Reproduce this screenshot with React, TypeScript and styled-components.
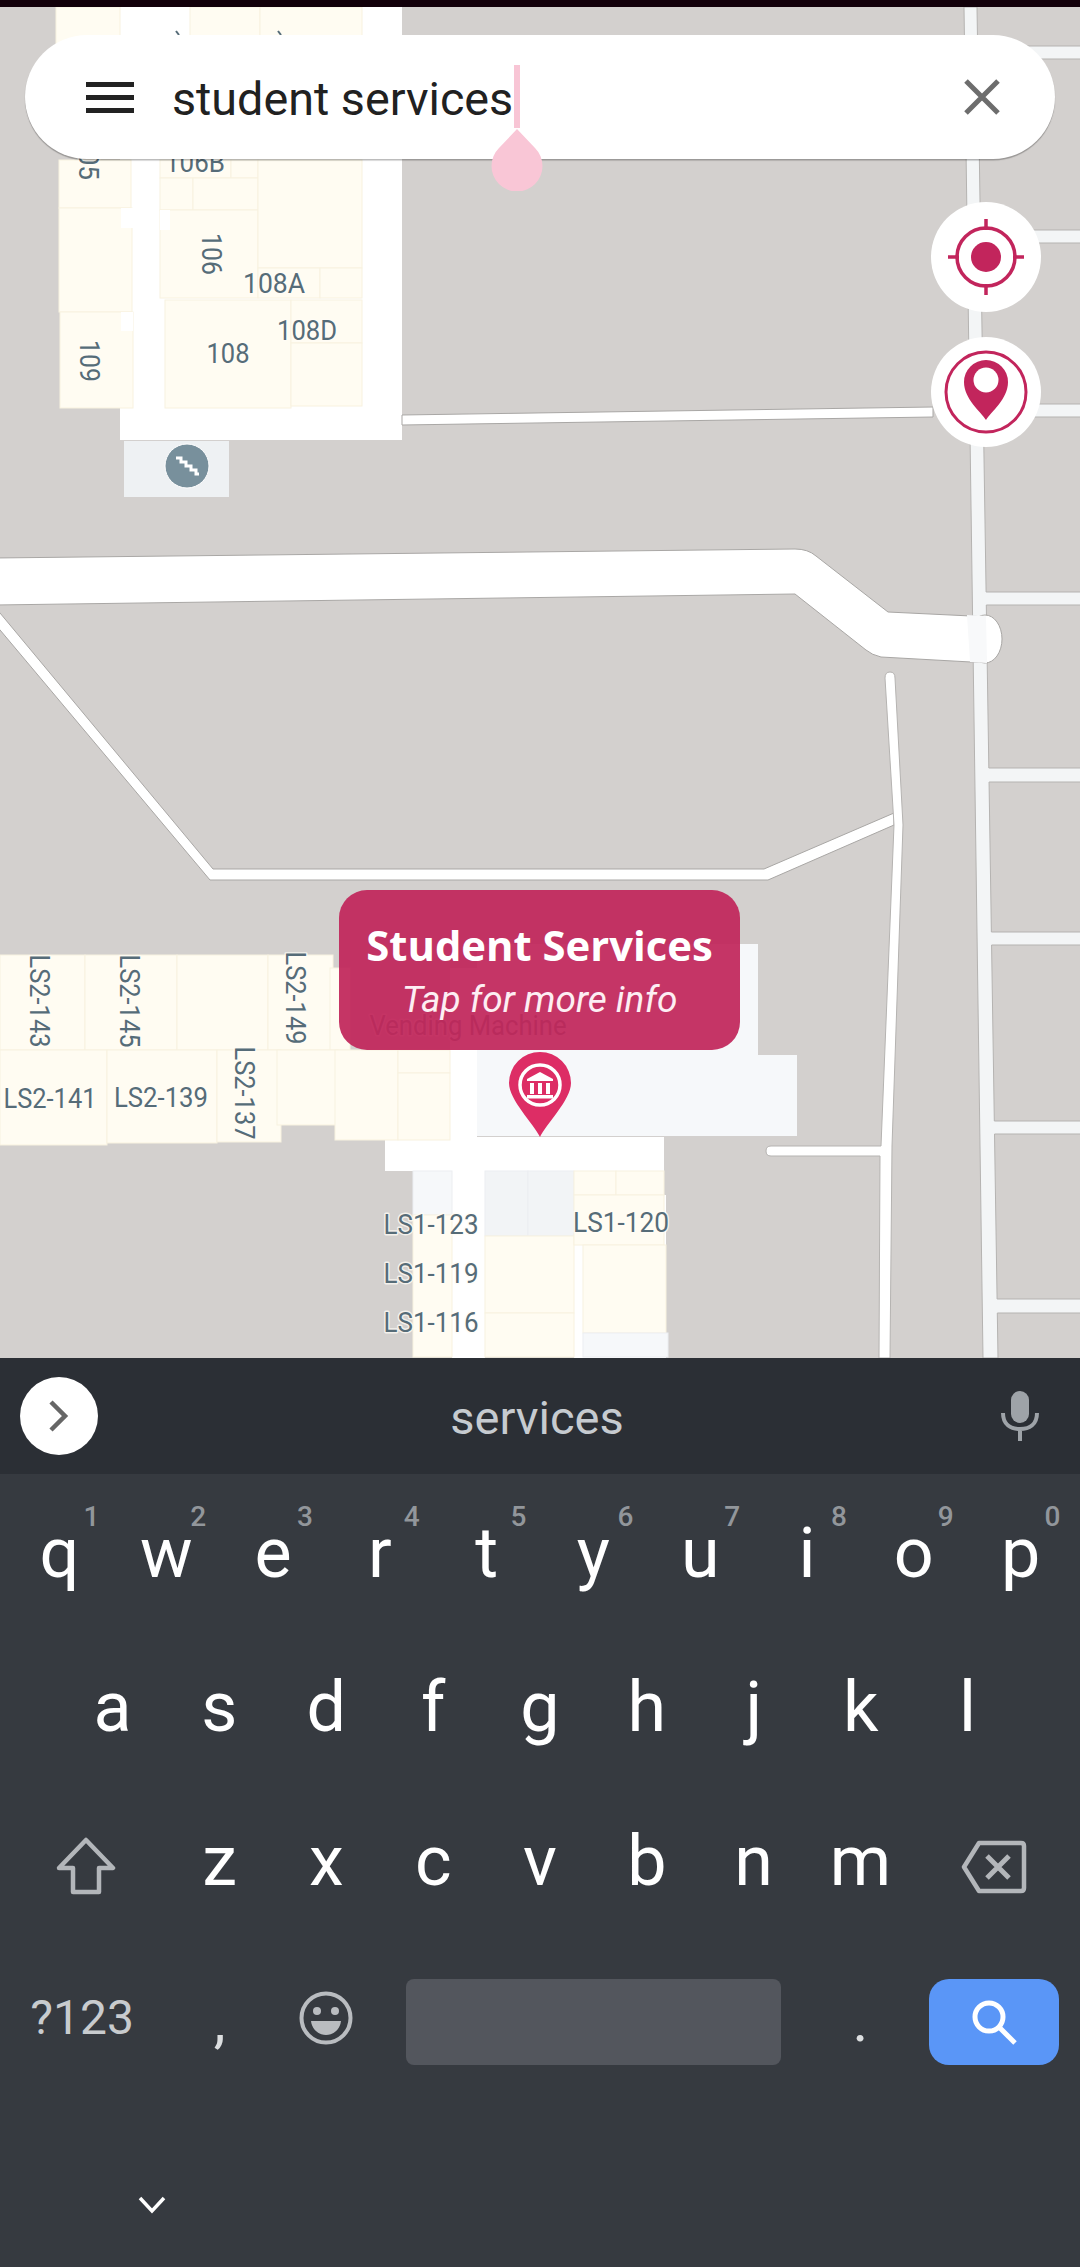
import React from 'react';
import styled, { createGlobalStyle } from 'styled-components';

const Global = createGlobalStyle`
  html, body { margin: 0; padding: 0; background: #363a40; }
`;

const Screen = styled.div`
  width: 1080px; height: 2267px; display: flex; flex-direction: column; overflow: hidden;
  font-family: Roboto, "Liberation Sans", sans-serif;
`;
const StatusStrip = styled.div`height: 7px; background: #12000a; flex: none;`;
const MapArea = styled.div`position: relative; height: 1351px; flex: none; background: #d3d0ce; overflow: hidden;`;
const MapSvg = styled.svg`position: absolute; inset: 0; display: block;`;
const RoomLabel = styled.text`
  font-family: Roboto, sans-serif; fill: #566c78; font-size: 27px;
  stroke: rgba(255,253,246,.75); stroke-width: 3px; paint-order: stroke; stroke-linejoin: round;
`;

const SearchBar = styled.div`
  position: absolute; left: 25px; top: 28px; width: 1030px; height: 124px; box-sizing: border-box;
  display: flex; align-items: center; padding: 0 55px 0 61px; gap: 38px;
  background: #fff; border-radius: 62px; box-shadow: 0 1.5px 1px rgba(0,0,0,.28);
`;
const MenuIcon = styled.span`
  width: 48px; height: 31px; flex: none; box-sizing: border-box;
  border-top: 5px solid #222; border-bottom: 5px solid #222; position: relative;
  &::after { content: ''; position: absolute; left: 0; right: 0; top: 8px; height: 5px; background: #222; }
`;
const QueryText = styled.span`font-size: 46.7px; color: #212121; flex: 1; line-height: 60px; padding-top: 3px;`;
const Caret = styled.div`position: absolute; left: 514px; top: 58px; width: 6px; height: 63px; background: #f8c5d5;`;
const CaretHandle = styled.svg`position: absolute; left: 491px; top: 122px;`;

const RoundButton = styled.div<{ $top: number }>`
  position: absolute; left: 931px; top: ${p => p.$top}px; width: 110px; height: 110px; border-radius: 50%;
  background: #fff; display: flex; align-items: center; justify-content: center;
`;

const Tooltip = styled.div`
  position: absolute; left: 339px; top: 883px; width: 401px; height: 160px; box-sizing: border-box;
  border-radius: 28px; background: rgba(193, 38, 90, .93); color: #fff;
  display: flex; flex-direction: column; align-items: center; padding-top: 27px;
`;
const TooltipTitle = styled.div`font-family: "Open Sans", sans-serif; font-weight: 700; font-size: 41.8px; line-height: 55px;`;
const TooltipSub = styled.div`font-family: Roboto, sans-serif; font-style: italic; font-size: 37px; line-height: 50px; margin-top: 3px; color: #fdeef3;`;
const PinMark = styled.svg`position: absolute; left: 508px; top: 1045px;`;

const SuggestionBar = styled.div`
  height: 116px; flex: none; background: #2b2f35; display: flex; align-items: center; justify-content: space-between;
  padding: 0 41px 0 20px; position: relative;
`;
const ExpandButton = styled.div`
  width: 78px; height: 78px; border-radius: 50%; background: #fff; display: flex; align-items: center; justify-content: center;
`;
const Suggestion = styled.div`
  position: absolute; left: 0; right: 0; text-align: center; padding-right: 6px; font-size: 47px; line-height: 60px; color: #c6cbd0;
  margin-top: 4px;
`;

const Keyboard = styled.div`flex: 1; background: #363a40; padding: 9px 6px 0; display: flex; flex-direction: column;`;
const Row = styled.div<{ $inset?: number }>`display: flex; height: 154px; flex: none; padding: 0 ${p => p.$inset || 0}px;`;
const Key = styled.div<{ $w?: number }>`
  flex: ${p => p.$w || 1} 0 0; position: relative; display: flex; align-items: center; justify-content: center; min-width: 0;
`;
const Letter = styled.span`font-size: 70px; line-height: 154px; color: #fff; padding-bottom: 14px;`;
const Hint = styled.span`
  position: absolute; left: calc(50% + 32px); top: 17px; transform: translateX(-50%);
  font-size: 28px; font-weight: 500; line-height: 34px; color: #92969b;
`;
const FnLabel = styled.span`font-size: 48px; line-height: 60px; color: #c8cbce; padding: 0 8px 8px 0;`;
const Punct = styled.span`font-size: 60px; line-height: 154px; color: #dcdee0; padding-bottom: 2px;`;
const SpaceBar = styled.div`height: 86px; width: 375px; border-radius: 8px; background: #53565d; margin-bottom: 1px;`;
const SpaceKey = styled.div`flex: 4 0 0; min-width: 0; display: flex; align-items: center; justify-content: center;`;
const SearchKey = styled.div`
  flex: 1.5 0 0; min-width: 0; display: flex; align-items: center; justify-content: flex-end;
`;
const SearchFace = styled.div`
  width: 130px; height: 86px; border-radius: 20px; background: #5a96f7; display: flex; align-items: center; justify-content: center;
  margin-right: 15px;
`;
const NavRow = styled.div`padding: 97px 0 0 132px; display: flex;`;
const ShiftGlyph = styled.svg`margin-bottom: 4px;`;
const BackGlyph = styled.svg`margin-bottom: 2px;`;
const EmojiGlyph = styled.svg`margin-bottom: 8px;`;

const cream = '#fffcf2';
const light = '#f6f8fa';
const white = '#ffffff';
type R = [number, number, number, number, string?];

const rooms: R[] = [
  [56, 7, 64, 40], [190, 7, 70, 40], [260, 7, 102, 40],
  [59, 160, 72, 48], [59, 208, 73, 104], [60, 312, 73, 96],
  [160, 160, 71, 18], [231, 160, 27, 18], [160, 178, 33, 32], [193, 178, 65, 32], [160, 210, 98, 88],
  [258, 160, 104, 108], [258, 268, 62, 30], [320, 268, 42, 30],
  [165, 300, 126, 108], [291, 300, 71, 43], [291, 343, 71, 63],
  [0, 955, 85, 95], [85, 955, 92, 95], [177, 955, 91, 95], [268, 955, 65, 95], [330, 968, 20, 82],
  [0, 1050, 107, 95], [107, 1050, 110, 93], [217, 1050, 64, 92], [277, 1050, 61, 75],
  [335, 1050, 63, 90], [398, 1050, 52, 23], [398, 1073, 52, 67],
  [413, 1171, 39, 44, light], [413, 1215, 39, 142],
  [485, 1171, 43, 65, '#f2f4f6'], [528, 1171, 46, 65, '#f2f4f6'],
  [485, 1236, 89, 77], [485, 1313, 89, 44],
  [574, 1171, 42, 24], [616, 1171, 48, 24], [574, 1195, 90, 50], [583, 1245, 83, 88], [583, 1333, 85, 24, light],
];
const corridorNotches: R[] = [[121, 208, 12, 20, white], [121, 312, 12, 19, white], [160, 210, 10, 20, white]];

const edge = '#a9a7a5';
const laneEdge = '#b5b3b1';
const laneRight = (y: number) => 977 + (y - 7) * 21 / 1350;
const crossStreets: [number, number][] = [[46, 59], [230, 243], [404, 417], [592, 605], [768, 782], [932, 945], [1121, 1134], [1299, 1313]];

type L = { t: string; x: number; y: number; len: number; rot?: boolean };
const labels: L[] = [
  { t: '105', x: 89, y: 158, len: 44, rot: true },
  { t: '106B', x: 195, y: 172, len: 60 },
  { t: '106', x: 212, y: 254, len: 42, rot: true },
  { t: '108A', x: 274, y: 293, len: 62 },
  { t: '108D', x: 307, y: 340, len: 60 },
  { t: '108', x: 228, y: 363, len: 43 },
  { t: '109', x: 90, y: 361, len: 42, rot: true },
  { t: 'LS2-143', x: 40, y: 1001, len: 93, rot: true },
  { t: 'LS2-145', x: 130, y: 1001, len: 93, rot: true },
  { t: 'LS2-149', x: 296, y: 998, len: 93, rot: true },
  { t: 'LS2-137', x: 245, y: 1093, len: 93, rot: true },
  { t: 'LS2-141', x: 50, y: 1108, len: 93 },
  { t: 'LS2-139', x: 161, y: 1107, len: 94 },
  { t: 'LS1-123', x: 431, y: 1234, len: 95 },
  { t: 'LS1-119', x: 431, y: 1283, len: 95 },
  { t: 'LS1-116', x: 431, y: 1332, len: 95 },
  { t: 'LS1-120', x: 621, y: 1232, len: 96 },
  { t: 'Vending Machine', x: 468, y: 1035, len: 197 },
];

const MapDrawing = () => (
  <MapSvg width={1080} height={1351} viewBox="0 7 1080 1351">
    <polygon points="964,7 977,7 998,1358 983,1358" fill="#f3f5f6" stroke={laneEdge} strokeWidth={1} />
    {crossStreets.map(([a, b]) => (
      <g key={a}>
        <rect x={laneRight(a) - 4} y={a} width={120} height={b - a} fill="#f3f5f6" />
        <line x1={laneRight(a)} y1={a} x2={1080} y2={a} stroke={laneEdge} />
        <line x1={laneRight(b)} y1={b} x2={1080} y2={b} stroke={laneEdge} />
      </g>
    ))}
    <rect x={120} y={7} width={282} height={433} fill={white} />
    <rect x={124} y={441} width={105} height={56} fill="#eef1f3" />
    <circle cx={187} cy={466} r={22} fill="#78909c" stroke="#fff" strokeWidth={1} />
    <polyline points="176,458 181,458 181,462 186,462 186,466 191,466 191,470 196,470 196,474 199,474" fill="none" stroke="#fff" strokeWidth={3} />
    <polygon points="402,415 933,407 933,417 402,425" fill={white} stroke={edge} strokeWidth={1} />
    <ellipse cx={985} cy={639} rx={17} ry={24} fill={white} stroke={edge} />
    <path d="M-5 558 L795 549 Q808 549 816 556 L888 612 L971 616 L985 617 L985 662 L971 662 L881 657 Q872 655 866 650 L795 594 L-5 605 Z" fill={white} stroke={edge} strokeWidth={1} />
    <polygon points="967,615 986,616 987,663 970,662" fill="#f8f9fa" />
    <polygon points="-5,607 213,869 764,869 894,813 894,825 768,880 210,880 -5,624" fill={white} stroke={edge} strokeWidth={1} />
    <path d="M885 678 Q885 672 890 672 Q895 672 895 678 L903 825 L892 1146 L890 1358 L879 1358 L880 1156 L771 1156 Q766 1156 766 1151 Q766 1146 771 1146 L881 1146 L894 825 Z" fill={white} stroke={laneEdge} strokeWidth={1} />
    <rect x={477} y={944} width={281} height={111} fill={light} />
    <rect x={477} y={1055} width={320} height={81} fill={light} />
    <rect x={450} y={968} width={27} height={170} fill={white} />
    <rect x={385} y={1137} width={279} height={34} fill={white} />
    <rect x={452} y={1171} width={33} height={187} fill={white} />
    <rect x={574} y={1195} width={92} height={163} fill={white} />
    {[...rooms, ...corridorNotches].map(([x, y, w, h, f], i) => (
      <rect key={i} x={x} y={y} width={w} height={h} fill={f || cream} stroke={f === white ? 'none' : f ? '#eceef1' : '#f8f2df'} strokeWidth={1} />
    ))}
    <line x1={176} y1={31} x2={179} y2={35} stroke="#566c78" strokeWidth={2} />
    <line x1={278} y1={31} x2={281} y2={35} stroke="#566c78" strokeWidth={2} />
    {labels.map(l => (
      <RoomLabel
        key={l.t}
        x={l.x}
        y={l.rot ? l.y + 10 : l.y}
        textAnchor="middle"
        textLength={l.len}
        lengthAdjust="spacingAndGlyphs"
        transform={l.rot ? `rotate(90 ${l.x} ${l.y})` : undefined}
      >
        {l.t}
      </RoomLabel>
    ))}
  </MapSvg>
);

const row1 = ['q', 'w', 'e', 'r', 't', 'y', 'u', 'i', 'o', 'p'];
const hints = ['1', '2', '3', '4', '5', '6', '7', '8', '9', '0'];
const row2 = ['a', 's', 'd', 'f', 'g', 'h', 'j', 'k', 'l'];
const row3 = ['z', 'x', 'c', 'v', 'b', 'n', 'm'];

export default function App() {
  return (
    <Screen>
      <Global />
      <StatusStrip />
      <MapArea>
        <MapDrawing />
        <Tooltip>
          <TooltipTitle>Student Services</TooltipTitle>
          <TooltipSub>Tap for more info</TooltipSub>
        </Tooltip>
        <PinMark width={64} height={86} viewBox="0 0 64 86">
          <path d="M32 85 C26 72 1 48 1 31 A31 31 0 0 1 63 31 C63 48 38 72 32 85 Z" fill="#dd2d65" />
          <circle cx={32} cy={33} r={20} fill="none" stroke="#fff" strokeWidth={3.5} />
          <path d="M32 20 L45 27 L45 29 L19 29 L19 27 Z" fill="#fff" />
          <rect x={22} y={31} width={4} height={11} fill="#fff" />
          <rect x={30} y={31} width={4} height={11} fill="#fff" />
          <rect x={38} y={31} width={4} height={11} fill="#fff" />
          <rect x={19} y={43} width={26} height={3.5} fill="#fff" />
        </PinMark>
        <SearchBar>
          <MenuIcon />
          <QueryText>student services</QueryText>
          <svg width={36} height={36} viewBox="0 0 36 36">
            <path d="M2 2 L34 34 M34 2 L2 34" stroke="#6d6d6d" strokeWidth={5} fill="none" />
          </svg>
        </SearchBar>
        <Caret />
        <CaretHandle width={52} height={62} viewBox="0 0 52 62">
          <path d="M26 0 L44 19 A25.5 25.5 0 1 1 8 19 Z" fill="#f9c6d6" />
        </CaretHandle>
        <RoundButton $top={195}>
          <svg width={78} height={78} viewBox="0 0 78 78">
            <circle cx={39} cy={39} r={29} fill="none" stroke="#c2255c" strokeWidth={3.5} />
            <circle cx={39} cy={39} r={15} fill="#c2255c" />
            <path d="M39 1 V12 M39 66 V77 M1 39 H12 M66 39 H77" stroke="#c2255c" strokeWidth={3.5} />
          </svg>
        </RoundButton>
        <RoundButton $top={330}>
          <svg width={86} height={86} viewBox="0 0 86 86">
            <circle cx={43} cy={43} r={40} fill="none" stroke="#c2255c" strokeWidth={3} />
            <path d="M43 71 C38 63 21 50 21 33 A22 22 0 0 1 65 33 C65 50 48 63 43 71 Z" fill="#c2255c" />
            <circle cx={43} cy={31} r={12.5} fill="#fff" />
          </svg>
        </RoundButton>
      </MapArea>
      <SuggestionBar>
        <ExpandButton>
          <svg width={24} height={36} viewBox="0 0 24 36">
            <path d="M4 4 L18 18 L4 32" fill="none" stroke="#666" strokeWidth={4.5} />
          </svg>
        </ExpandButton>
        <Suggestion>services</Suggestion>
        <svg width={38} height={50} viewBox="0 0 38 50">
          <rect x={10} y={0} width={18} height={32} rx={9} fill="#9ea3a8" />
          <path d="M2 22 C2 34 10 38 19 38 C28 38 36 34 36 22 M19 38 V50" fill="none" stroke="#9ea3a8" strokeWidth={4} />
        </svg>
      </SuggestionBar>
      <Keyboard>
        <Row>
          {row1.map((k, i) => (
            <Key key={k}><Letter>{k}</Letter><Hint>{hints[i]}</Hint></Key>
          ))}
        </Row>
        <Row $inset={53}>
          {row2.map(k => <Key key={k}><Letter>{k}</Letter></Key>)}
        </Row>
        <Row>
          <Key $w={1.5}>
            <ShiftGlyph width={60} height={58} viewBox="0 0 60 58">
              <path d="M30 3 L57 31 H43 V55 H17 V31 H3 Z" fill="none" stroke="#b3b6ba" strokeWidth={4.5} strokeLinejoin="round" />
            </ShiftGlyph>
          </Key>
          {row3.map(k => <Key key={k}><Letter>{k}</Letter></Key>)}
          <Key $w={1.5}>
            <BackGlyph width={66} height={54} viewBox="0 0 66 54">
              <path d="M18 3 H60 Q63 3 63 6 V48 Q63 51 60 51 H18 L3 27 Z" fill="none" stroke="#b3b6ba" strokeWidth={4.5} strokeLinejoin="round" />
              <path d="M26 16 L48 38 M48 16 L26 38" stroke="#b3b6ba" strokeWidth={5} />
            </BackGlyph>
          </Key>
        </Row>
        <Row>
          <Key $w={1.5}><FnLabel>?123</FnLabel></Key>
          <Key><Punct>,</Punct></Key>
          <Key>
            <EmojiGlyph width={54} height={54} viewBox="0 0 54 54">
              <circle cx={27} cy={27} r={24.5} fill="none" stroke="#b9bcc0" strokeWidth={4} />
              <circle cx={18} cy={20} r={4} fill="#b9bcc0" />
              <circle cx={36} cy={20} r={4} fill="#b9bcc0" />
              <path d="M12 30 H42 C41 39 34 44 27 44 C20 44 13 39 12 30 Z" fill="#b9bcc0" />
            </EmojiGlyph>
          </Key>
          <SpaceKey><SpaceBar /></SpaceKey>
          <Key><Punct>.</Punct></Key>
          <SearchKey>
            <SearchFace>
              <svg width={46} height={46} viewBox="0 0 46 46">
                <circle cx={18} cy={18} r={14} fill="none" stroke="#fff" strokeWidth={5} />
                <path d="M28 28 L44 44" stroke="#fff" strokeWidth={5} />
              </svg>
            </SearchFace>
          </SearchKey>
        </Row>
        <NavRow>
          <svg width={28} height={18} viewBox="0 0 28 18">
            <path d="M2 2 L14 15 L26 2" fill="none" stroke="#fff" strokeWidth={3.5} />
          </svg>
        </NavRow>
      </Keyboard>
    </Screen>
  );
}
